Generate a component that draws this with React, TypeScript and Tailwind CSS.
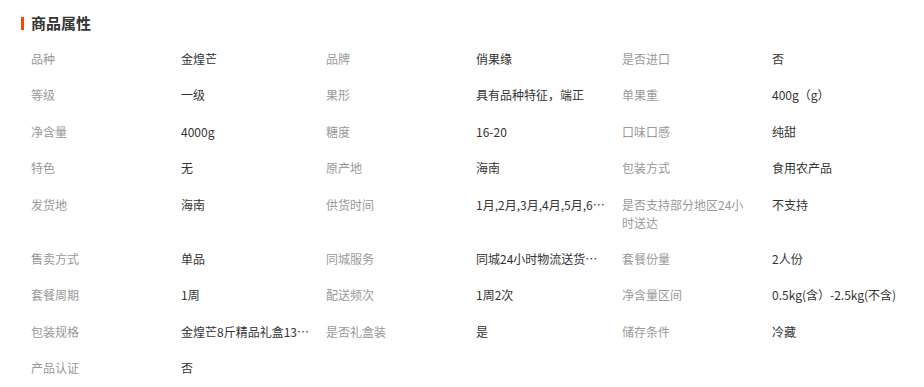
const attrs: [string, string][] = [
  ["品种", "金煌芒"],
  ["品牌", "俏果缘"],
  ["是否进口", "否"],
  ["等级", "一级"],
  ["果形", "具有品种特征，端正"],
  ["单果重", "400g（g）"],
  ["净含量", "4000g"],
  ["糖度", "16-20"],
  ["口味口感", "纯甜"],
  ["特色", "无"],
  ["原产地", "海南"],
  ["包装方式", "食用农产品"],
  ["发货地", "海南"],
  ["供货时间", "1月,2月,3月,4月,5月,6月,7月,8月"],
  ["是否支持部分地区24小时送达", "不支持"],
  ["售卖方式", "单品"],
  ["同城服务", "同城24小时物流送货上门"],
  ["套餐份量", "2人份"],
  ["套餐周期", "1周"],
  ["配送频次", "1周2次"],
  ["净含量区间", "0.5kg(含）-2.5kg(不含)"],
  ["包装规格", "金煌芒8斤精品礼盒13-15个"],
  ["是否礼盒装", "是"],
  ["储存条件", "冷藏"],
  ["产品认证", "否"],
];

export default function App() {
  return (
    <div
      className="min-h-screen bg-white pt-[13px]"
      style={{ fontFamily: '"Noto Sans CJK SC", "Noto Sans", sans-serif' }}
    >
      <div className="flex items-center pl-[21px] h-5">
        <span className="w-[3px] h-[13px] bg-[#ff4400] mr-[7px]" />
        <h2 className="text-[15px] leading-5 font-bold text-[#333]">商品属性</h2>
      </div>

      <div className="mt-2 pl-[31px] grid grid-cols-[150px_145px_150px_146px_150px_1fr] gap-y-[0.4px] text-[12px] leading-[18px]">
        {attrs.map(([label, value], i) => {
          const last = i % 3 === 2;
          return [
            <div key={`l${i}`} className="py-[9px] pr-5 text-[#999] break-all">
              {label}
            </div>,
            <div
              key={`v${i}`}
              className={`py-[9px] text-[#333] ${last ? "whitespace-nowrap" : "pr-4 truncate"}`}
            >
              {value}
            </div>,
          ];
        })}
      </div>
    </div>
  );
}
